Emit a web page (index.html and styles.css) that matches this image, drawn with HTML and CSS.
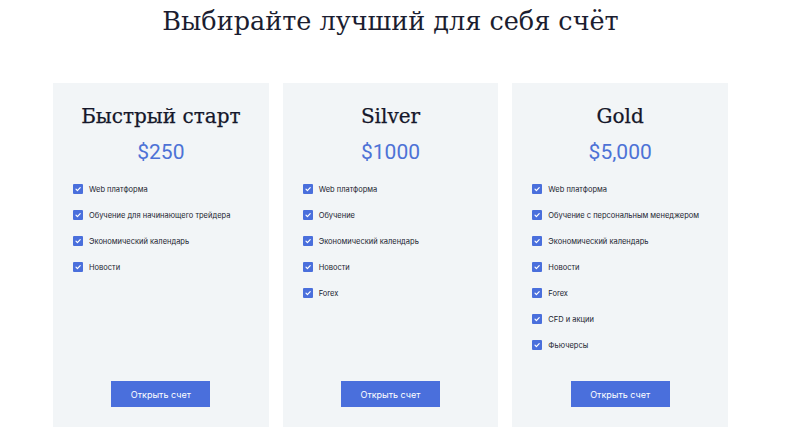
FILE: index.html
```html
<!DOCTYPE html>
<html lang="ru">
<head>
<meta charset="utf-8">
<title>Счета</title>
<link rel="stylesheet" href="styles.css">
</head>
<body>
<main class="page">
  <h1 class="heading">Выбирайте лучший для себя счёт</h1>
  <div class="plans">
    <section class="card">
      <h2 class="card-title">Быстрый старт</h2>
      <div class="price">$250</div>
      <ul class="features">
        <li><span class="check"><svg viewBox="0 0 10 10"><path d="M3 5.2 L4.4 6.6 L7.2 3.6" /></svg></span>Web платформа</li>
        <li><span class="check"><svg viewBox="0 0 10 10"><path d="M3 5.2 L4.4 6.6 L7.2 3.6" /></svg></span>Обучение для начинающего трейдера</li>
        <li><span class="check"><svg viewBox="0 0 10 10"><path d="M3 5.2 L4.4 6.6 L7.2 3.6" /></svg></span>Экономический календарь</li>
        <li><span class="check"><svg viewBox="0 0 10 10"><path d="M3 5.2 L4.4 6.6 L7.2 3.6" /></svg></span>Новости</li>
      </ul>
      <button class="btn">Открыть счет</button>
    </section>
    <section class="card">
      <h2 class="card-title">Silver</h2>
      <div class="price">$1000</div>
      <ul class="features">
        <li><span class="check"><svg viewBox="0 0 10 10"><path d="M3 5.2 L4.4 6.6 L7.2 3.6" /></svg></span>Web платформа</li>
        <li><span class="check"><svg viewBox="0 0 10 10"><path d="M3 5.2 L4.4 6.6 L7.2 3.6" /></svg></span>Обучение</li>
        <li><span class="check"><svg viewBox="0 0 10 10"><path d="M3 5.2 L4.4 6.6 L7.2 3.6" /></svg></span>Экономический календарь</li>
        <li><span class="check"><svg viewBox="0 0 10 10"><path d="M3 5.2 L4.4 6.6 L7.2 3.6" /></svg></span>Новости</li>
        <li><span class="check"><svg viewBox="0 0 10 10"><path d="M3 5.2 L4.4 6.6 L7.2 3.6" /></svg></span>Forex</li>
      </ul>
      <button class="btn">Открыть счет</button>
    </section>
    <section class="card">
      <h2 class="card-title">Gold</h2>
      <div class="price">$5,000</div>
      <ul class="features">
        <li><span class="check"><svg viewBox="0 0 10 10"><path d="M3 5.2 L4.4 6.6 L7.2 3.6" /></svg></span>Web платформа</li>
        <li><span class="check"><svg viewBox="0 0 10 10"><path d="M3 5.2 L4.4 6.6 L7.2 3.6" /></svg></span>Обучение с персональным менеджером</li>
        <li><span class="check"><svg viewBox="0 0 10 10"><path d="M3 5.2 L4.4 6.6 L7.2 3.6" /></svg></span>Экономический календарь</li>
        <li><span class="check"><svg viewBox="0 0 10 10"><path d="M3 5.2 L4.4 6.6 L7.2 3.6" /></svg></span>Новости</li>
        <li><span class="check"><svg viewBox="0 0 10 10"><path d="M3 5.2 L4.4 6.6 L7.2 3.6" /></svg></span>Forex</li>
        <li><span class="check"><svg viewBox="0 0 10 10"><path d="M3 5.2 L4.4 6.6 L7.2 3.6" /></svg></span>CFD и акции</li>
        <li><span class="check"><svg viewBox="0 0 10 10"><path d="M3 5.2 L4.4 6.6 L7.2 3.6" /></svg></span>Фьючерсы</li>
      </ul>
      <button class="btn">Открыть счет</button>
    </section>
  </div>
</main>
</body>
</html>
```
FILE: styles.css
```css
* { box-sizing: border-box; }
html, body { margin: 0; padding: 0; background: #fff; }
body { width: 800px; height: 442px; overflow: hidden; }
.page {
  width: 675px;
  margin-left: 53px;
  display: flex;
  flex-direction: column;
}
.heading {
  margin: 0;
  padding-top: 2px;
  height: 83px;
  text-align: center;
  font-family: "DejaVu Serif", "Liberation Serif", serif;
  font-weight: normal;
  font-size: 25.5px;
  line-height: 38px;
  color: #1b1d30;
}
.plans {
  display: flex;
  gap: 14px;
}
.card {
  width: 216px;
  height: 344px;
  background: #f2f5f7;
  padding: 20px 20px 20px 20px;
  display: flex;
  flex-direction: column;
  align-items: stretch;
}
.card-title {
  margin: 0;
  text-align: center;
  font-family: "DejaVu Serif", "Liberation Serif", serif;
  font-weight: normal;
  font-size: 20px;
  line-height: 26px;
  color: #15172a;
  -webkit-text-stroke: 0.25px #15172a;
}
.price {
  margin-top: 10px;
  text-align: center;
  font-family: Roboto, "Liberation Sans", sans-serif;
  font-size: 21px;
  line-height: 26px;
  color: #4d72d6;
}
.features {
  list-style: none;
  margin: 18px 0 0 0;
  padding: 0;
  display: flex;
  flex-direction: column;
  gap: 14px;
}
.features li {
  display: flex;
  align-items: center;
  height: 12px;
  white-space: nowrap;
  font-family: Inter, "Noto Sans", sans-serif;
  font-size: 7.5px;
  color: #1b1d30;
}
.check {
  width: 10px;
  height: 10px;
  background: #4a6fdc;
  border-radius: 1px;
  margin-right: 6px;
  flex: none;
  display: flex;
}
.check svg { width: 10px; height: 10px; }
.check path { fill: none; stroke: #fff; stroke-width: 1.2; stroke-linecap: round; stroke-linejoin: round; }
.btn {
  margin-top: auto;
  align-self: center;
  width: 99px;
  height: 26px;
  border: none;
  background: #4a6fdc;
  color: #fff;
  font-family: Inter, "Noto Sans", sans-serif;
  font-size: 9px;
  padding: 0;
}
```
